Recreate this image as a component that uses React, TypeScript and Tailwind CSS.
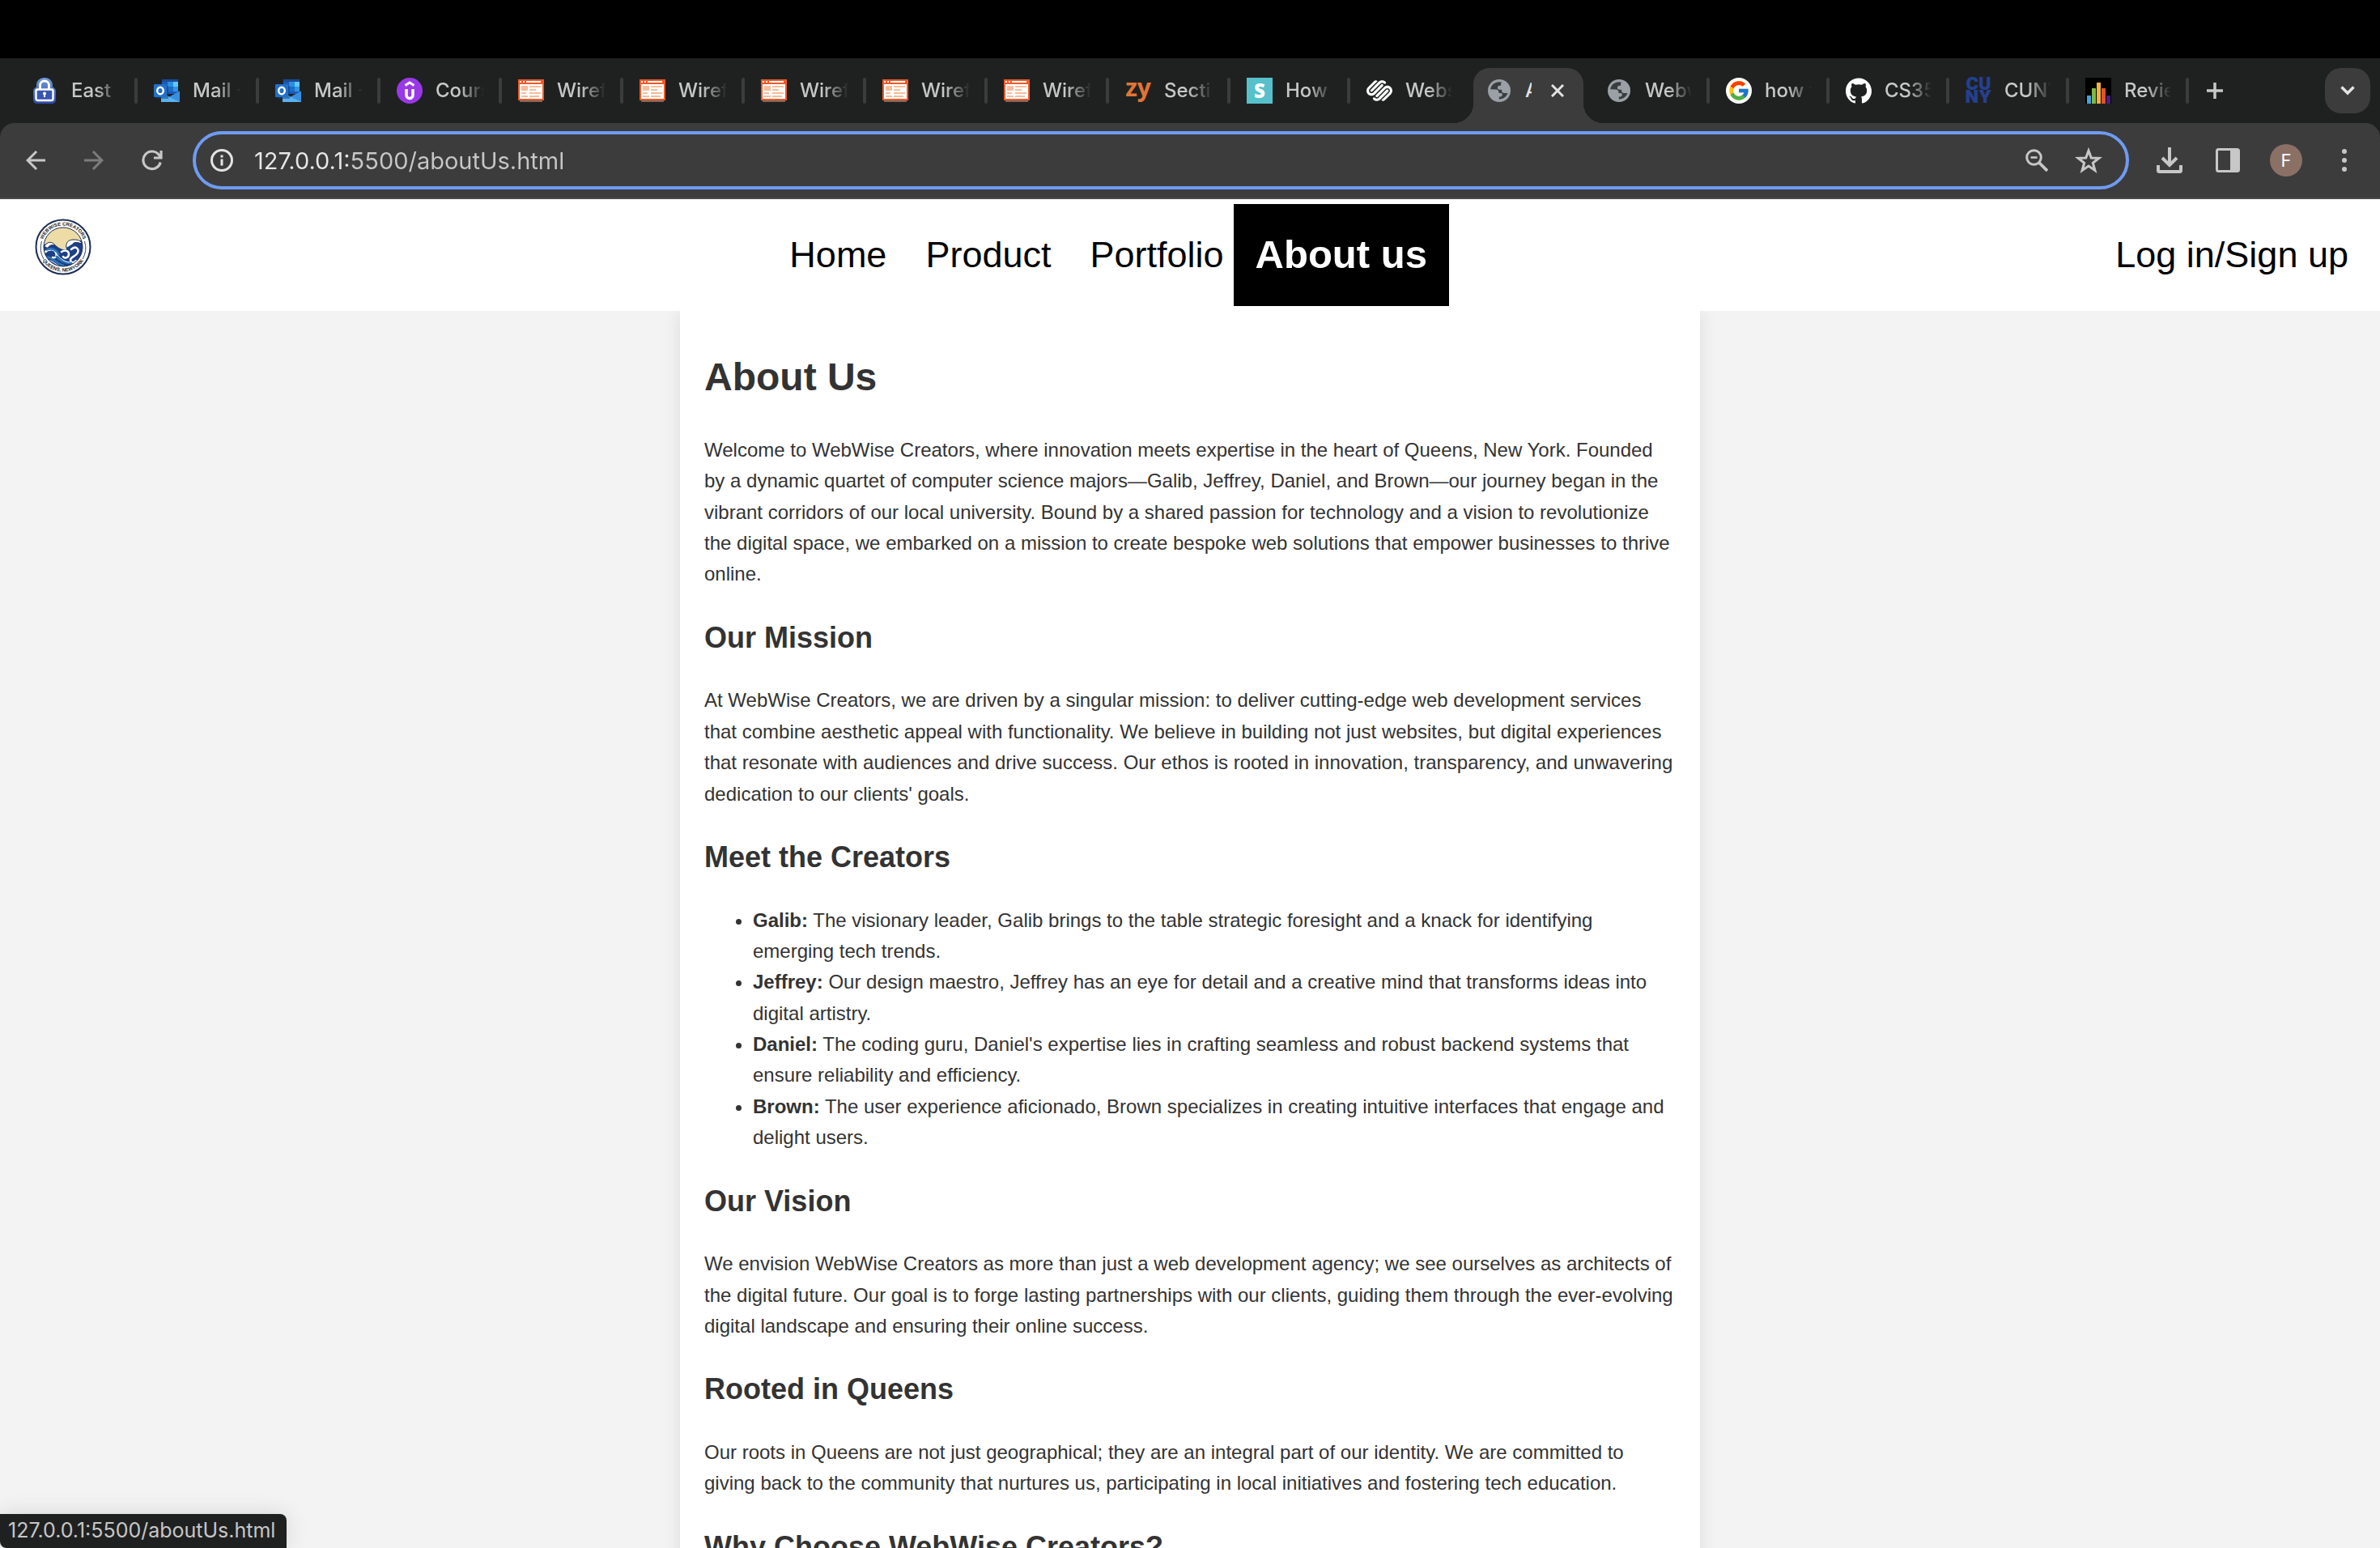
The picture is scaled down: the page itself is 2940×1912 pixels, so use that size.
import React from "react";
import { FcGoogle } from "react-icons/fc";
import { MdArrowBack, MdArrowForward } from "react-icons/md";
import { SiGithub, SiSquarespace } from "react-icons/si";

const LockIcon = () => (
  <svg width="32" height="32" viewBox="0 0 32 32" aria-hidden="true">
    <defs>
      <linearGradient id="lockFill" x1="0" y1="0" x2="0" y2="1">
        <stop offset="0" stopColor="#6f9bd6" />
        <stop offset="1" stopColor="#2f4aa8" />
      </linearGradient>
    </defs>
    <path d="M15 0C8.500 0 5 4.500 5 9v2.500C2.500 12.500 1 14.500 1 17v10c0 3 2 5 5 5h18c3 0 5-2 5-5V17c0-2.500-1.500-4.500-4-5.500V9c0-4.500-3.500-9-10-9z" fill="url(#lockFill)" />
    <path d="M9.500 15v-5.500a5.500 5.500 0 0 1 11 0V15" fill="none" stroke="#fff" strokeWidth="2.800" />
    <rect x="4.500" y="14.500" width="21" height="13.500" rx="2" fill="#3a57b0" stroke="#fff" strokeWidth="2.400" />
    <circle cx="15" cy="19.500" r="2" fill="#fff" />
    <path d="M14 20h2v4h-2z" fill="#fff" />
  </svg>
);

const OutlookIcon = () => (
  <svg width="32" height="32" viewBox="0 0 32 32" aria-hidden="true">
    <path d="M10 2h20v18H10z" fill="#1a5ab8" />
    <path d="M10 2h20v3H10z" fill="#1c4a94" />
    <path d="M17 5h7v6h-7z" fill="#2a8fe0" />
    <path d="M24 5h6v6h-6z" fill="#5cc8fb" />
    <path d="M17 11h7v6h-7z" fill="#1e6cc4" />
    <path d="M24 11h6v6h-6z" fill="#2e98e6" />
    <path d="M9 18l11 6 12-7.500V30H9z" fill="#4aa5ea" />
    <path d="M32 16.500V30L19 23.500z" fill="#3a8fdc" />
    <path d="M9 19l23 11H9z" fill="#5ab2ee" />
    <rect x="3" y="10" width="15" height="16" fill="#123f7d" opacity=".5" />
    <rect x="0" y="8" width="16" height="16" rx="1" fill="#2170cc" />
    <ellipse cx="8" cy="16" rx="3.800" ry="4.300" fill="none" stroke="#fff" strokeWidth="2.400" />
  </svg>
);

const UdemyIcon = () => (
  <svg width="32" height="32" viewBox="0 0 32 32" aria-hidden="true">
    <circle cx="16" cy="16" r="16" fill="#9a38e8" />
    <path d="M10.500 9.500L16 6l5.500 3.500" fill="none" stroke="#fff" strokeWidth="3" />
    <path d="M12 14v7.500a4 4 0 0 0 8 0V14" fill="none" stroke="#fff" strokeWidth="3.500" />
  </svg>
);

const WireframeIcon = () => (
  <svg width="32" height="32" viewBox="0 0 32 32" aria-hidden="true">
    <path d="M2 28h28v2H2z" fill="#80655a" />
    <path d="M0 2h32v26H0z" fill="#f05a28" />
    <path d="M2 4h2v2H2zM6 4h2v2H6zM10 4h18v2H10zM2 8h28v18H2z" fill="#fff" />
    <path d="M4 10h8v6H4zM14 10h14v2H14zM14 14h8v2h-8zM4 18h6v2H4zM14 18h14v2H14zM4 22h8v2H4zM14 22h12v2H14z" fill="#f6bd9b" />
  </svg>
);

const ZyIcon = () => (
  <span aria-hidden="true" className="flex h-8 w-8 shrink-0 items-center justify-center pb-2 font-['Open_Sans',sans-serif] text-[30px] leading-8 font-bold text-[#e27434]">
    zy
  </span>
);

const SkillIcon = () => (
  <span aria-hidden="true" className="flex h-8 w-8 shrink-0 items-center justify-center bg-[#56c1cb] font-['Open_Sans',sans-serif] text-[24px] leading-8 font-extrabold text-white">
    S
  </span>
);

const CunyIcon = () => (
  <span aria-hidden="true" className="flex h-8 w-8 shrink-0 flex-col items-center justify-center text-[21px] leading-4 font-black text-[#24408f]">
    <span>CU</span>
    <span>NY</span>
  </span>
);

const GlobeIcon = () => (
  <svg width="32" height="32" viewBox="0 0 32 32" aria-hidden="true">
    <circle cx="16" cy="16" r="14" fill="#9aa0a6" />
    <path
      d="M16 5.200C10.500 5.200 6 9 5.200 14.200L12 14.500c2 .2 3.400 1.400 3.400 3.200v1.400h2.800c1 0 1.600.8 1.600 1.800 0 2-1.600 2.600-3 2.600h-1v2.900c4.800.3 9.300-3 10.700-7.400h-4.300c-2 0-3.100-1.200-3.100-2.800v-1.400h-2.700c-1.600 0-2.500-1.100-2.500-2.500 0-1.500 1-2.500 2.600-2.500h1.600V7.600c0-1 .4-1.700 1-2.100z"
      fill="#3a3d3f"
    />
  </svg>
);

const BarsIcon = () => (
  <svg width="32" height="32" viewBox="0 0 32 32" aria-hidden="true">
    <path d="M0 0h32v32H0z" fill="#000" />
    <path d="M2 22h5v10H2z" fill="#4a9fe0" />
    <path d="M8 13h5v19H8z" fill="#7fb848" />
    <path d="M14 6h5v26h-5z" fill="#f2b23c" />
    <path d="M20 13h5v19h-5z" fill="#e0522e" />
    <path d="M26 22h5v10h-5z" fill="#4c1f80" />
  </svg>
);

const SquareIcon = () => <SiSquarespace className="h-8 w-8 shrink-0 text-white" aria-hidden="true" />;
const GithubIcon = () => <SiGithub className="h-8 w-8 shrink-0 text-white" aria-hidden="true" />;
const GoogleIcon = () => (
  <span className="flex h-8 w-8 shrink-0 items-center justify-center rounded-full bg-white">
    <FcGoogle className="h-7 w-7" aria-hidden="true" />
  </span>
);

type TabInfo = { title: string; Icon: () => React.JSX.Element; wide?: boolean; active?: boolean; bare?: boolean };

const tabs: TabInfo[] = [
  { title: "East", Icon: LockIcon, wide: true },
  { title: "Mail - F", Icon: OutlookIcon, wide: true },
  { title: "Mail - F", Icon: OutlookIcon, wide: true },
  { title: "Course", Icon: UdemyIcon, wide: true },
  { title: "Wirefra", Icon: WireframeIcon, wide: true },
  { title: "Wirefra", Icon: WireframeIcon, wide: true },
  { title: "Wirefra", Icon: WireframeIcon, wide: true },
  { title: "Wirefra", Icon: WireframeIcon, wide: true },
  { title: "Wirefra", Icon: WireframeIcon, wide: true },
  { title: "Section", Icon: ZyIcon, wide: true },
  { title: "How", Icon: SkillIcon },
  { title: "Website", Icon: SquareIcon, bare: true },
  { title: "About", Icon: GlobeIcon, active: true, bare: true },
  { title: "Webw", Icon: GlobeIcon },
  { title: "how t", Icon: GoogleIcon },
  { title: "CS350", Icon: GithubIcon },
  { title: "CUNY", Icon: CunyIcon },
  { title: "Review", Icon: BarsIcon },
];

function Tab({ title, Icon, wide, active, bare }: TabInfo) {
  if (active) {
    return (
      <>
        <div className="relative mx-1 mt-3 flex h-[68px] w-[136px] items-center rounded-t-[20px] bg-[#3c3c3c] pr-6 pb-3 pl-4">
          <span className="absolute bottom-0 -left-6 h-6 w-6 bg-[radial-gradient(circle_at_0_0,transparent_24px,#3c3c3c_24px)]" />
          <span className="absolute -right-6 bottom-0 h-6 w-6 bg-[radial-gradient(circle_at_100%_0,transparent_24px,#3c3c3c_24px)]" />
          <button type="button" className="flex min-w-0 flex-1 items-center gap-4 text-[#e3e3e3]">
            <Icon />
            <span className="w-2 overflow-hidden text-left whitespace-nowrap">{title}</span>
          </button>
          <button type="button" aria-label="Close tab" className="text-[#e3e3e3]">
            <svg width="16" height="16" viewBox="0 0 16 16" fill="none" stroke="currentColor" strokeWidth="3">
              <path d="M1 1l14 14M15 1L1 15" />
            </svg>
          </button>
        </div>
        <span className="w-1" />
      </>
    );
  }
  return (
    <>
      <button
        type="button"
        className={
          (wide ? "w-[146px]" : "w-[144px]") + " flex h-20 min-w-0 items-center gap-4 pr-[18px] pl-5 text-[#c7c7c7]"
        }
      >
        <Icon />
        <span className="min-w-0 flex-1 overflow-hidden text-left whitespace-nowrap [mask-image:linear-gradient(to_right,black_50%,transparent)]">
          {title}
        </span>
      </button>
      <span className={bare ? "w-1" : "h-8 w-1 rounded-full bg-[#3c3c3c]"} />
    </>
  );
}

function TabStrip() {
  return (
    <div className="flex h-20 items-center bg-[#1f2120] pr-3 pl-5 text-[24px] leading-8 font-medium">
      {tabs.map((tab, i) => (
        <Tab key={i} {...tab} />
      ))}
      <button type="button" aria-label="New tab" className="ml-[22px] text-[#c7c7c7]">
        <svg width="20" height="20" viewBox="0 0 20 20" fill="none" stroke="currentColor" strokeWidth="3.500">
          <path d="M10 0v20M0 10h20" />
        </svg>
      </button>
      <button type="button" aria-label="Search tabs" className="ml-auto flex h-14 w-14 items-center justify-center rounded-[20px] bg-[#3c3c3c] text-[#e3e3e3]">
        <svg width="18" height="12" viewBox="0 0 18 12" fill="none" stroke="currentColor" strokeWidth="3.500">
          <path d="M1.500 1.500L9 9l7.500-7.500" />
        </svg>
      </button>
    </div>
  );
}

const toolButton = "flex h-14 w-14 items-center justify-center";

function Toolbar() {
  return (
    <div className="bg-[#1f2120]">
      <div className="flex h-[94px] items-center rounded-t-[18px] border-b-2 border-[#4a4a4a] bg-[#3c3c3c] px-4 text-[#c7c7c7]">
        <div className="flex gap-4">
          <button type="button" aria-label="Back" className={toolButton}>
            <MdArrowBack className="h-9 w-9" />
          </button>
          <button type="button" aria-label="Forward" className={toolButton + " text-[#7c7c7c]"}>
            <MdArrowForward className="h-9 w-9" />
          </button>
          <button type="button" aria-label="Reload" className={toolButton}>
            <svg width="26" height="26" viewBox="0 0 26 26" fill="none" stroke="currentColor" strokeWidth="3.200">
              <path d="M23.200 15.500A10.800 10.800 0 1 1 21.500 6.500L24 9.500" />
              <path d="M24 1v9h-9" />
            </svg>
          </button>
        </div>
        <div className="mx-[22px] flex h-[72px] flex-1 items-center rounded-full border-4 border-[#6f9bf2] pr-[30px] pl-[18px]">
          <button type="button" aria-label="View site information" className="text-[#e3e3e3]">
            <svg width="28" height="28" viewBox="0 0 28 28" fill="none" stroke="currentColor" strokeWidth="3">
              <circle cx="14" cy="14" r="12.500" />
              <path d="M14 12.500v8M14 7.500v3" />
            </svg>
          </button>
          <input
            type="text"
            aria-label="Address"
            defaultValue="127.0.0.1:5500/aboutUs.html"
            className="ml-[26px] h-14 flex-1 bg-[linear-gradient(to_right,#e8e8e8_120px,#c7c7c7_120px)] bg-clip-text text-[29px] text-transparent outline-none"
          />
          <div className="flex gap-8">
            <button type="button" aria-label="Zoom" className="flex h-8 w-8 items-center justify-center">
              <svg width="28" height="28" viewBox="0 0 28 28" fill="none" stroke="currentColor" strokeWidth="3">
                <circle cx="10.500" cy="10.500" r="8.800" />
                <path d="M16.500 16.500L27 27" strokeWidth="3.800" />
                <path d="M6.500 10.500h8" strokeWidth="2.600" />
              </svg>
            </button>
            <button type="button" aria-label="Bookmark this tab" className="flex h-8 w-8 items-center justify-center">
              <svg width="34" height="34" viewBox="0 0 34 34" fill="none" stroke="currentColor" strokeWidth="3" className="shrink-0">
                <path d="M17 5l3.300 9 9.500.3-7.500 5.900 2.600 9.200-7.900-5.300-7.900 5.300 2.600-9.200-7.500-5.900 9.500-.3z" />
              </svg>
            </button>
          </div>
        </div>
        <div className="flex gap-4">
          <button type="button" aria-label="Downloads" className={toolButton}>
            <svg width="32" height="32" viewBox="0 0 32 32" fill="none" stroke="currentColor" strokeWidth="4">
              <path d="M16 0v21M7 13l9 9 9-9M2 22v6.500a1.500 1.500 0 0 0 1.500 1.500h25a1.500 1.500 0 0 0 1.500-1.500V22" />
            </svg>
          </button>
          <button type="button" aria-label="Side panel" className={toolButton}>
            <svg width="30" height="30" viewBox="0 0 30 30" fill="none" stroke="currentColor" strokeWidth="3">
              <rect x="1.500" y="1.500" width="27" height="27" rx="2" />
              <path d="M18 2h10v26H18z" fill="currentColor" stroke="none" />
            </svg>
          </button>
          <button type="button" aria-label="Profile" className={toolButton}>
            <span className="flex h-10 w-10 items-center justify-center rounded-full bg-[#8b7066] text-[22px] text-white">F</span>
          </button>
          <button type="button" aria-label="Menu" className={toolButton}>
            <svg width="6" height="28" viewBox="0 0 6 28" fill="currentColor">
              <circle cx="3" cy="3" r="3" />
              <circle cx="3" cy="14" r="3" />
              <circle cx="3" cy="25" r="3" />
            </svg>
          </button>
        </div>
      </div>
    </div>
  );
}

const Logo = () => (
  <svg width="70" height="70" viewBox="0 0 70 70" role="img" aria-label="WebWise Creators, Queens, New York">
    <defs>
      <path id="ringTop" d="M8.500 35a26.500 26.500 0 0 1 53 0" />
      <path id="ringBottom" d="M4.500 35a30.500 30.500 0 0 0 61 0" />
      <clipPath id="scene">
        <circle cx="35" cy="35" r="24" />
      </clipPath>
    </defs>
    <circle cx="35" cy="35" r="33.500" fill="#fff" stroke="#1d2d55" strokeWidth="2" />
    <g fontFamily="Liberation Sans, sans-serif" fontSize="6" fontWeight="700" fill="#222">
      <text>
        <textPath href="#ringTop" startOffset="50%" textAnchor="middle">WEBWISE CREATORS</textPath>
      </text>
      <text>
        <textPath href="#ringBottom" startOffset="50%" textAnchor="middle">QUEENS, NEWYORK</textPath>
      </text>
    </g>
    <path d="M8.500 28a27 27 0 0 0 2.500 22M61.500 28a27 27 0 0 1-2.500 22" fill="none" stroke="#3b4668" strokeWidth="1" />
    <g clipPath="url(#scene)">
      <path d="M10 10h50v50H10z" fill="#eddca6" />
      <path d="M10 33c8-5 12-3 17 1s9 5 12 4c-1-6 2-11 9-11h12v35H10z" fill="#1c3f86" />
      <path d="M12 34c3-6 10-6 13-1-4-1-7 0-9 3M39 36c-1-6 2-10 9-10 5 0 9 1 10 5-5-2-9-2-11 0" fill="#fff" stroke="#1d2d55" strokeWidth="1" />
      <path d="M12 42c5-5 12-5 14 0s-1 7-4 6M33 41c5-3 9-1 9 3s-5 6-7 3M45 38c5-5 10-1 8 4s-9 5-9 9 5 4 7 1" fill="none" stroke="#fff" strokeWidth="2.500" strokeLinecap="round" />
      <path d="M12 48c8-3 14 8 24 10M26 46c6 8 14 9 20 9M14 39c7-4 13 0 16 6" fill="none" stroke="#2e77bd" strokeWidth="2.500" />
      <path d="M14 51c7 0 11 5 17 8M28 45c5 6 9 8 15 9" fill="none" stroke="#fff" strokeWidth="1" />
    </g>
    <circle cx="35" cy="35" r="24" fill="none" stroke="#1d2d55" strokeWidth="1" />
  </svg>
);

function SiteHeader() {
  return (
    <header className="relative flex h-[138px] items-center justify-between bg-white px-[15px] text-[45px] text-black">
      <a href="#home" className="flex w-[125px] justify-center pb-5">
        <Logo />
      </a>
      <nav className="flex items-center">
        <a href="#home" className="px-6">Home</a>
        <a href="#product" className="px-6">Product</a>
        <a href="#portfolio" className="px-6">Portfolio</a>
        <a
          href="#about"
          aria-current="page"
          className="-mx-3 flex h-[126px] items-center bg-black px-[27px] text-[49px] font-bold text-white"
        >
          About us
        </a>
      </nav>
      <a href="#login" className="px-6">Log in/Sign up</a>
    </header>
  );
}

const creators = [
  { name: "Galib:", text: "The visionary leader, Galib brings to the table strategic foresight and a knack for identifying emerging tech trends." },
  { name: "Jeffrey:", text: "Our design maestro, Jeffrey has an eye for detail and a creative mind that transforms ideas into digital artistry." },
  { name: "Daniel:", text: "The coding guru, Daniel's expertise lies in crafting seamless and robust backend systems that ensure reliability and efficiency." },
  { name: "Brown:", text: "The user experience aficionado, Brown specializes in creating intuitive interfaces that engage and delight users." },
];

const Heading = ({ children }: { children: React.ReactNode }) => (
  <h2 className="my-[30px] text-[36px] leading-[1.6] font-bold">{children}</h2>
);

function Article() {
  return (
    <main className="mx-auto w-full max-w-[1260px] flex-1 bg-white px-[30px] pt-11 text-[24px] leading-[1.6] text-[#333] shadow-[0_0_20px_rgba(0,0,0,0.1)]">
      <h1 className="mb-8 text-[48px] leading-[1.6] font-bold">About Us</h1>
      <p>
        Welcome to WebWise Creators, where innovation meets expertise in the heart of Queens, New York. Founded by a
        dynamic quartet of computer science majors—Galib, Jeffrey, Daniel, and Brown—our journey began in the vibrant
        corridors of our local university. Bound by a shared passion for technology and a vision to revolutionize the
        digital space, we embarked on a mission to create bespoke web solutions that empower businesses to thrive
        online.
      </p>
      <Heading>Our Mission</Heading>
      <p>
        At WebWise Creators, we are driven by a singular mission: to deliver cutting-edge web development services that
        combine aesthetic appeal with functionality. We believe in building not just websites, but digital experiences
        that resonate with audiences and drive success. Our ethos is rooted in innovation, transparency, and unwavering
        dedication to our clients' goals.
      </p>
      <Heading>Meet the Creators</Heading>
      <ul className="list-disc pl-[60px]">
        {creators.map((c) => (
          <li key={c.name}>
            <strong>{c.name}</strong> {c.text}
          </li>
        ))}
      </ul>
      <Heading>Our Vision</Heading>
      <p>
        We envision WebWise Creators as more than just a web development agency; we see ourselves as architects of the
        digital future. Our goal is to forge lasting partnerships with our clients, guiding them through the
        ever-evolving digital landscape and ensuring their online success.
      </p>
      <Heading>Rooted in Queens</Heading>
      <p>
        Our roots in Queens are not just geographical; they are an integral part of our identity. We are committed to
        giving back to the community that nurtures us, participating in local initiatives and fostering tech education.
      </p>
      <Heading>Why Choose WebWise Creators?</Heading>
    </main>
  );
}

export default function App() {
  return (
    <div className="relative flex h-screen flex-col overflow-hidden bg-[#f3f3f3] font-['Liberation_Sans',Arial,sans-serif]">
      <div className="shrink-0 bg-black pt-[72px] font-['Inter',sans-serif]">
        <TabStrip />
        <Toolbar />
      </div>
      <div className="flex min-h-0 flex-1 flex-col overflow-hidden">
        <div className="relative z-10 shrink-0">
          <SiteHeader />
        </div>
        <Article />
      </div>
      <div className="absolute bottom-0 left-0 z-20 flex h-[42px] items-center rounded-tr-lg rounded-bl-lg bg-[#1f2120] pr-[14px] pl-[10px] font-['Inter',sans-serif] text-[25px] text-[#c7c7c7] shadow-[0_0_28px_rgba(0,0,0,0.12)]">
        127.0.0.1:5500/aboutUs.html
      </div>
    </div>
  );
}
